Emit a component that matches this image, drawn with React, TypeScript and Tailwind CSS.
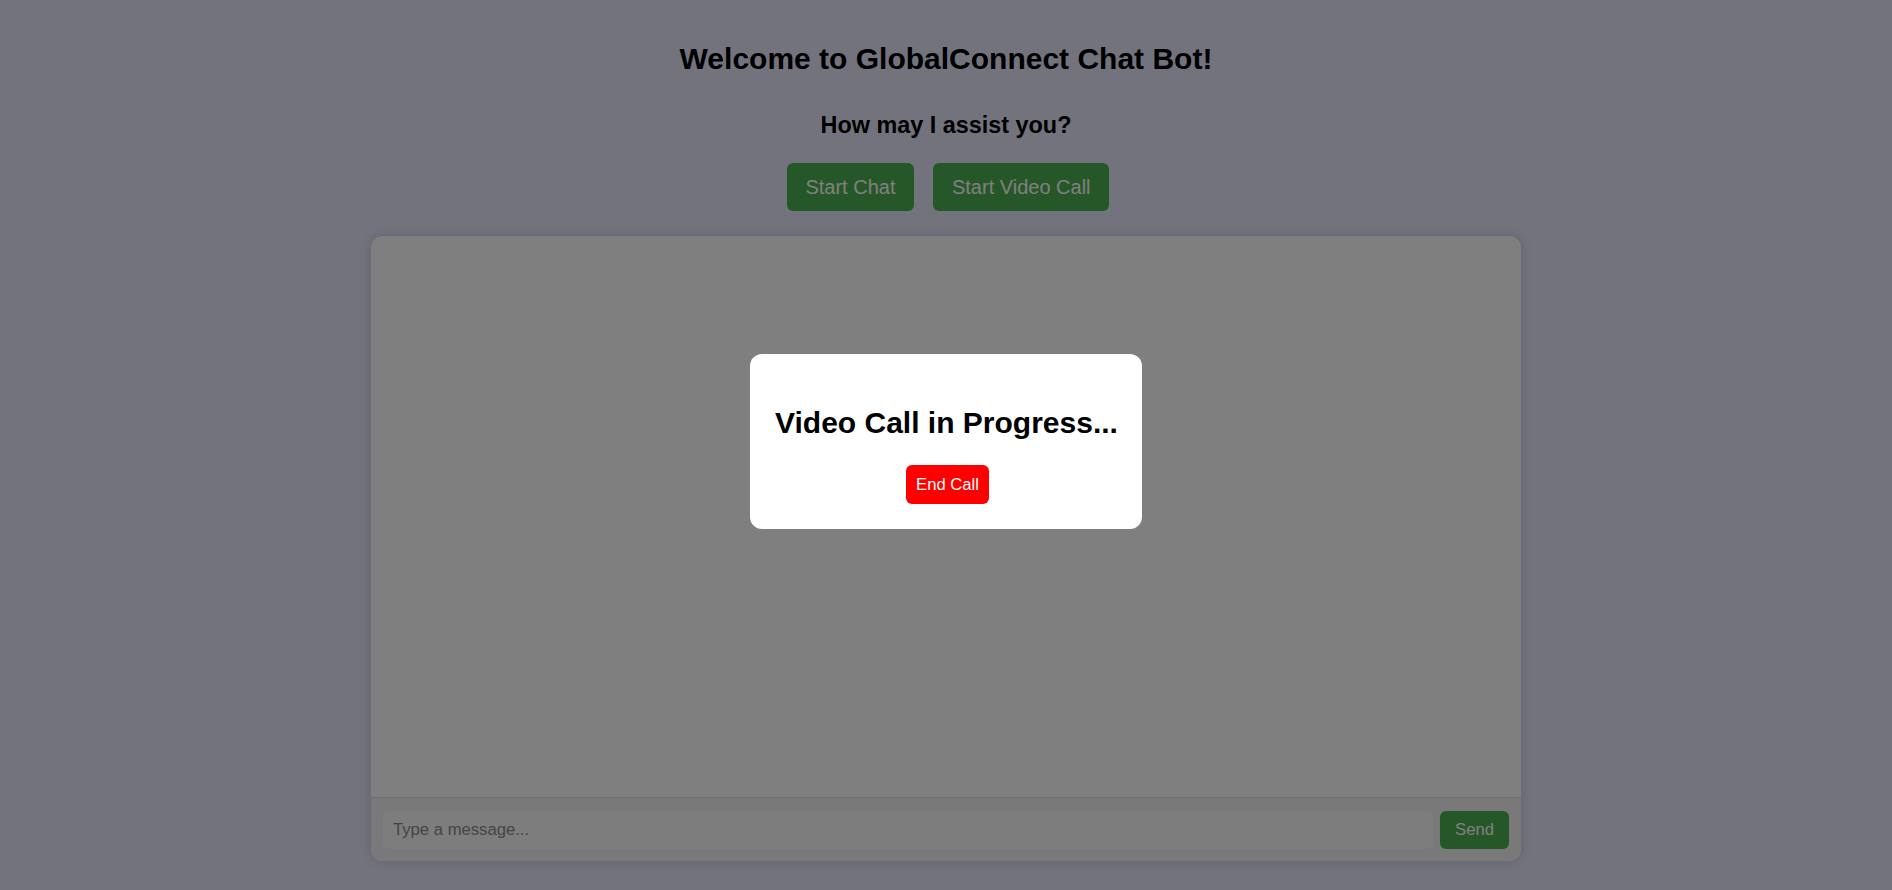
import React from "react";

export default function App() {
  return (
    <div className="min-h-screen w-full bg-[#e6e6fa] font-['Liberation_Sans',Arial,sans-serif] text-black flex flex-col items-center pt-[42px]">
      <h1 className="text-[30px] font-bold leading-[34.5px]">Welcome to GlobalConnect Chat Bot!</h1>
      <h3 className="mt-[35px] text-[23.4px] font-bold leading-[27px]">How may I assist you?</h3>
      <div className="mt-[24.5px] ml-[4px] flex gap-[19px]">
        <button className="h-[48px] px-[18.75px] text-[20px] leading-[23px] bg-[#4caf50] text-white rounded-[6px]">Start Chat</button>
        <button className="h-[48px] px-[18.75px] text-[20px] leading-[23px] bg-[#4caf50] text-white rounded-[6px]">Start Video Call</button>
      </div>
      <div className="mt-[25px] w-[1150px] h-[625px] bg-white rounded-[12px] shadow-[0_0_12px_rgba(0,0,0,0.15)] flex flex-col overflow-hidden">
        <div className="flex-1" />
        <div className="border-t border-[#dddddd] bg-[#f2f2f2] px-[12px] pt-[13px] pb-[12.5px] flex gap-[7px]">
          <input
            className="flex-1 h-[38px] rounded-[6px] bg-[#fafafa] px-[10px] text-[16.67px] outline-none placeholder:text-[#8a8a8a]"
            placeholder="Type a message..."
          />
          <button className="h-[38px] px-[15px] text-[16.67px] bg-[#4caf50] text-white rounded-[6px]">Send</button>
        </div>
      </div>
      <div className="fixed inset-0 bg-black/50 flex items-center justify-center pb-[8px]">
        <div className="bg-white rounded-[12px] px-[25px] pt-[27.5px] pb-[25px] text-center w-[392px]">
          <h2 className="my-[24.5px] text-[30px] font-bold leading-[34.5px] whitespace-nowrap">Video Call in Progress...</h2>
          <button className="h-[39px] px-[10px] text-[16.67px] bg-[#ff0000] text-white rounded-[6px] ml-[3px]">End Call</button>
        </div>
      </div>
    </div>
  );
}
